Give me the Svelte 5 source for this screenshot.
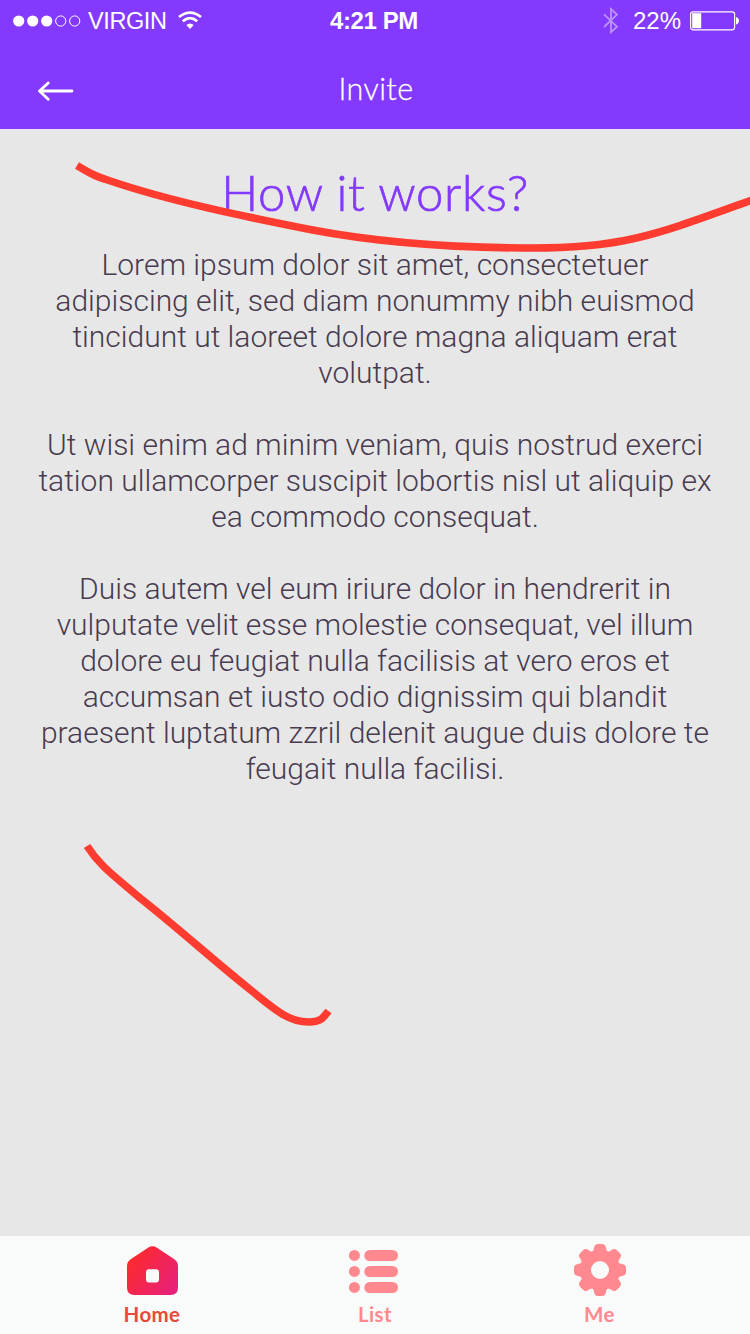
<script>
  const paragraphs = [
    [
      'Lorem ipsum dolor sit amet, consectetuer',
      'adipiscing elit, sed diam nonummy nibh euismod',
      'tincidunt ut laoreet dolore magna aliquam erat',
      'volutpat.'
    ],
    [
      'Ut wisi enim ad minim veniam, quis nostrud exerci',
      'tation ullamcorper suscipit lobortis nisl ut aliquip ex',
      'ea commodo consequat.'
    ],
    [
      'Duis autem vel eum iriure dolor in hendrerit in',
      'vulputate velit esse molestie consequat, vel illum',
      'dolore eu feugiat nulla facilisis at vero eros et',
      'accumsan et iusto odio dignissim qui blandit',
      'praesent luptatum zzril delenit augue duis dolore te',
      'feugait nulla facilisi.'
    ]
  ];
  const teeth = [0, 45, 90, 135, 180, 225, 270, 315];
</script>

<div class="screen">
  <header>
    <div class="status">
      <div class="carrier">
        <svg class="signal" width="68" height="12" viewBox="0 0 68 12">
          {#each [0, 1, 2, 3, 4] as i}
            <circle cx={5.7 + i * 14} cy="6" r={i < 3 ? 5.6 : 5.1} fill={i < 3 ? '#fff' : 'none'} stroke={i < 3 ? 'none' : '#fff'} />
          {/each}
        </svg>
        <span class="network">VIRGIN</span>
        <svg class="wifi" width="24" height="18" viewBox="0 0 24 18" fill="none" stroke="#fff" stroke-width="2.8">
          <path d="M1 6Q12-2.8 23 6M4.8 10.2Q12 4.1 19.2 10.2" />
          <path d="M8.3 14.1Q12 10.700 15.700 14.1L12 18Z" fill="#fff" stroke="none" />
        </svg>
      </div>
      <span class="time">4:21 PM</span>
      <div class="power">
        <svg class="bluetooth" width="16" height="28" viewBox="0 0 16 28" fill="none" stroke="#fff" stroke-width="1.8" opacity=".45">
          <path d="M1 7.3L14 19.7L8 25.2V2L14 7.6L1 20" />
        </svg>
        <span class="percent">22%</span>
        <svg class="battery" width="50" height="20" viewBox="0 0 50 20">
          <rect x=".6" y=".8" width="44" height="18" rx="2.5" fill="none" stroke="#fff" stroke-width="1.2" />
          <rect x="2.2" y="2.2" width="9" height="15" fill="#fff" />
          <path d="M46 6Q49 7 49 9.8T46 13.6Z" fill="#fff" />
        </svg>
      </div>
    </div>
    <div class="nav">
      <svg class="back" width="36" height="20" viewBox="0 0 36 20" fill="none" stroke="#fff" stroke-width="2.8" stroke-linecap="round" stroke-linejoin="round">
        <path d="M10.2 1.9L1.5 10L10.2 18.3M2 10H34" />
      </svg>
      <span class="title">Invite</span>
      <i></i>
    </div>
  </header>

  <main>
    <h1>How it works?</h1>
    {#each paragraphs as lines}
      <p>{#each lines as line}<span>{line}</span>{/each}</p>
    {/each}
    <svg class="strokes" width="750" height="1107" viewBox="0 129 750 1107" fill="none" stroke="#ff3c2f" stroke-width="7.6">
      <path d="M77 165.5C91 174 95 176 109 180.5C169 201 242 216 310 229.5C375 242 450 247.5 524 248C622 249 655 235 752 200" />
      <path d="M87 846C100 866 112 874 140 898C178 928 212 959 247 987C274 1009 288 1022 309 1022C321 1022 323 1018 328.5 1011" />
    </svg>
  </main>

  <footer>
    <div class="tab home">
      <svg width="52" height="52" viewBox="0 0 52 52">
        <defs>
          <linearGradient id="warm" x1="0" y1=".15" x2="1" y2=".85">
            <stop offset="0" stop-color="#ff2b25" />
            <stop offset="1" stop-color="#e6207d" />
          </linearGradient>
        </defs>
        <path fill="url(#warm)" fill-rule="evenodd" d="M22 3.700Q26.500 1 31 3.700L48 15Q52 17.700 52 22V43.500Q52 51 44.500 51H8.500Q1 51 1 43.500V22Q1 17.700 5 15ZM23 25.200Q20 25.200 20 28.200V35.400Q20 38.400 23 38.400H30Q33 38.400 33 35.400V28.200Q33 25.200 30 25.200Z" />
      </svg>
      <span>Home</span>
    </div>
    <div class="tab">
      <svg width="52" height="52" viewBox="0 0 52 52" fill="#ff898f">
        {#each [6, 22, 38] as y}
          <circle cx="5.4" cy={y + 5.4} r="5.5" />
          <rect x="15.3" {y} width="33.7" height="11" rx="5.5" />
        {/each}
      </svg>
      <span>List</span>
    </div>
    <div class="tab me">
      <svg width="52" height="52" viewBox="0 0 52 52">
        <g transform="translate(26 26)" fill="none" stroke="#ff898f">
          <circle r="14.5" stroke-width="11" />
          {#each teeth as angle}
            <path transform="rotate({angle})" fill="#ff898f" stroke="none" d="M-9.500-17Q-6.500-18-6-22Q-5.500-26-2-26H2Q5.500-26 6-22Q6.500-18 9.500-17Z" />
          {/each}
        </g>
      </svg>
      <span>Me</span>
    </div>
  </footer>
</div>

<style>
  .screen { width: 750px; height: 1334px; display: flex; flex-direction: column; overflow: hidden; background: #e7e7e7; }
  header { height: 129px; flex: none; background: #8439ff; color: #fff; }
  .status { height: 41px; display: grid; grid-template-columns: 1fr auto 1fr; align-items: center; padding: 0 10px 0 13px; font-family: "Liberation Sans", sans-serif; }
  .carrier, .power { display: flex; align-items: center; }
  .power { justify-content: flex-end; }
  .network { margin-left: 7px; font-size: 23.5px; letter-spacing: -.4px; line-height: 30px; }
  .wifi { margin-left: 11px; margin-top: -2px; }
  .time { font-size: 24px; font-weight: 700; letter-spacing: -.4px; padding: 1px 5px 0 0; line-height: 30px; }
  .percent { margin: 0 9px 0 14px; font-size: 24px; line-height: 30px; }
  .nav { height: 88px; display: grid; grid-template-columns: 36px 1fr 36px; align-items: center; padding: 0 36px 0 38px; text-align: center; }
  .back { margin-top: 11px; }
  .title { font: 300 30.5px/40px Lato, sans-serif; margin-top: 5px; letter-spacing: .4px; -webkit-text-stroke: .3px; }
  main { position: relative; flex: 1; text-align: center; padding-top: 33px; box-sizing: border-box; }
  h1 { margin: 0 0 25px; font: 300 49px/60px Lato, sans-serif; letter-spacing: .6px; -webkit-text-stroke: .7px; color: #8439ff; }
  p { margin: 0 0 36px; font: 300 30px/36px Roboto, sans-serif; color: #483b50; }
  p span { display: block; white-space: nowrap; }
  .strokes { position: absolute; left: 0; top: 0; }
  footer { height: 98px; flex: none; background: #f9fbfa; display: grid; grid-template-columns: repeat(3, 223px); justify-content: center; padding-top: 8px; box-sizing: border-box; }
  .tab { display: flex; flex-direction: column; align-items: center; color: #ff898f; font: 700 20.5px/28px Lato, sans-serif; letter-spacing: .4px; gap: 4px; }
  .home { color: #e8493d; }
  .me { padding-left: 3px; }
</style>
